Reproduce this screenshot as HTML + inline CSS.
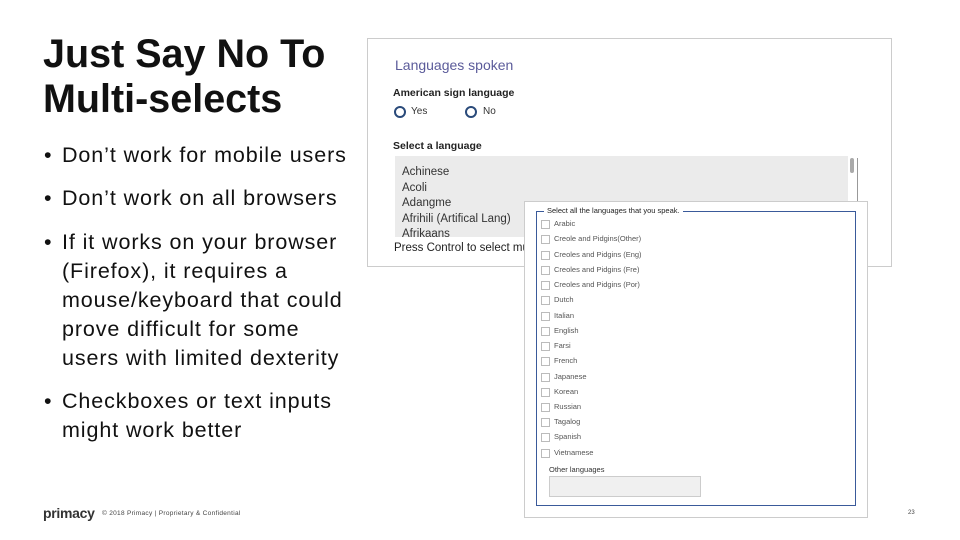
<!DOCTYPE html><html><head><style>
body{margin:0;width:960px;height:540px;background:#fff;position:relative;overflow:hidden;font-family:"Liberation Sans",sans-serif}
.a{position:absolute;white-space:nowrap}
h1{position:absolute;left:43px;top:32px;margin:0;font-size:39.5px;line-height:45px;font-weight:bold;color:#111}
.b{position:absolute;left:44px;font-size:21.5px;line-height:29px;color:#111;letter-spacing:0.9px;white-space:nowrap}
.b span{position:absolute;left:0}
.b div{padding-left:18px}
.cb{position:absolute;left:541px;width:7px;height:7px;border:1px solid #bbb}
.ct{position:absolute;left:554px;font-size:7.5px;color:#555}
</style></head><body>
<h1>Just Say No To<br>Multi-selects</h1>
<div class="b" style="top:141px"><span>•</span><div>Don’t work for mobile users</div></div>
<div class="b" style="top:184px"><span>•</span><div>Don’t work on all browsers</div></div>
<div class="b" style="top:228px"><span>•</span><div>If it works on your browser<br>(Firefox), it requires a<br>mouse/keyboard that could<br>prove difficult for some<br>users with limited dexterity</div></div>
<div class="b" style="top:387px"><span>•</span><div>Checkboxes or text inputs<br>might work better</div></div>

<div class="a" style="left:367px;top:38px;width:525px;height:229px;border:1px solid #ccc;box-sizing:border-box"></div>
<div class="a" style="left:395px;top:57px;font-size:14px;color:#5b5b9a">Languages spoken</div>
<div class="a" style="left:393px;top:87px;font-size:10.5px;font-weight:bold;color:#222">American sign language</div>
<div class="a" style="left:394px;top:106px;width:8px;height:8px;border:2px solid #2a4a7a;border-radius:50%"></div>
<div class="a" style="left:411px;top:106px;font-size:10px;color:#333">Yes</div>
<div class="a" style="left:465px;top:106px;width:8px;height:8px;border:2px solid #2a4a7a;border-radius:50%"></div>
<div class="a" style="left:483px;top:106px;font-size:10px;color:#333">No</div>
<div class="a" style="left:393px;top:140px;font-size:10.5px;font-weight:bold;color:#222">Select a language</div>
<div class="a" style="left:395px;top:156px;width:453px;height:81px;background:#ebebeb;overflow:hidden">
<div style="padding:9px 0 0 7px;font-size:11.5px;line-height:15.5px;color:#333">Achinese<br>Acoli<br>Adangme<br>Afrihili (Artifical Lang)<br>Afrikaans</div></div>
<div class="a" style="left:850px;top:158px;width:4px;height:15px;background:#aaa;border-radius:2px"></div>
<div class="a" style="left:857px;top:158px;width:1px;height:70px;background:#999"></div>
<div class="a" style="left:394px;top:242px;font-size:11.5px;color:#222">Press Control to select multiple</div>

<div class="a" style="left:524px;top:201px;width:344px;height:317px;background:#fff;border:1px solid #ccc;box-sizing:border-box"></div>
<div class="a" style="left:536px;top:211px;width:320px;height:295px;border:1px solid #3a5a9a;box-sizing:border-box"></div>
<div class="a" style="left:544px;top:206px;font-size:7.5px;background:#fff;padding:0 3px;color:#222">Select all the languages that you speak.</div>
<div class="cb" style="top:220px"></div><div class="ct" style="top:219px">Arabic</div>
<div class="cb" style="top:235px"></div><div class="ct" style="top:234px">Creole and Pidgins(Other)</div>
<div class="cb" style="top:251px"></div><div class="ct" style="top:250px">Creoles and Pidgins (Eng)</div>
<div class="cb" style="top:266px"></div><div class="ct" style="top:265px">Creoles and Pidgins (Fre)</div>
<div class="cb" style="top:281px"></div><div class="ct" style="top:280px">Creoles and Pidgins (Por)</div>
<div class="cb" style="top:296px"></div><div class="ct" style="top:295px">Dutch</div>
<div class="cb" style="top:312px"></div><div class="ct" style="top:311px">Italian</div>
<div class="cb" style="top:327px"></div><div class="ct" style="top:326px">English</div>
<div class="cb" style="top:342px"></div><div class="ct" style="top:341px">Farsi</div>
<div class="cb" style="top:357px"></div><div class="ct" style="top:356px">French</div>
<div class="cb" style="top:373px"></div><div class="ct" style="top:372px">Japanese</div>
<div class="cb" style="top:388px"></div><div class="ct" style="top:387px">Korean</div>
<div class="cb" style="top:403px"></div><div class="ct" style="top:402px">Russian</div>
<div class="cb" style="top:418px"></div><div class="ct" style="top:417px">Tagalog</div>
<div class="cb" style="top:433px"></div><div class="ct" style="top:432px">Spanish</div>
<div class="cb" style="top:449px"></div><div class="ct" style="top:448px">Vietnamese</div>
<div class="a" style="left:549px;top:465px;font-size:7.5px;color:#333">Other languages</div>
<div class="a" style="left:549px;top:476px;width:152px;height:21px;background:#f0f0f0;border:1px solid #ccc;box-sizing:border-box"></div>

<div class="a" style="left:43px;top:505px;font-size:14px;font-weight:bold;color:#333;letter-spacing:-0.3px">primacy</div>
<div class="a" style="left:102px;top:510px;font-size:6.5px;color:#444;letter-spacing:0.3px">© 2018 Primacy | Proprietary &amp; Confidential</div>
<div class="a" style="left:908px;top:510px;font-size:6px;color:#444">23</div>
</body></html>
